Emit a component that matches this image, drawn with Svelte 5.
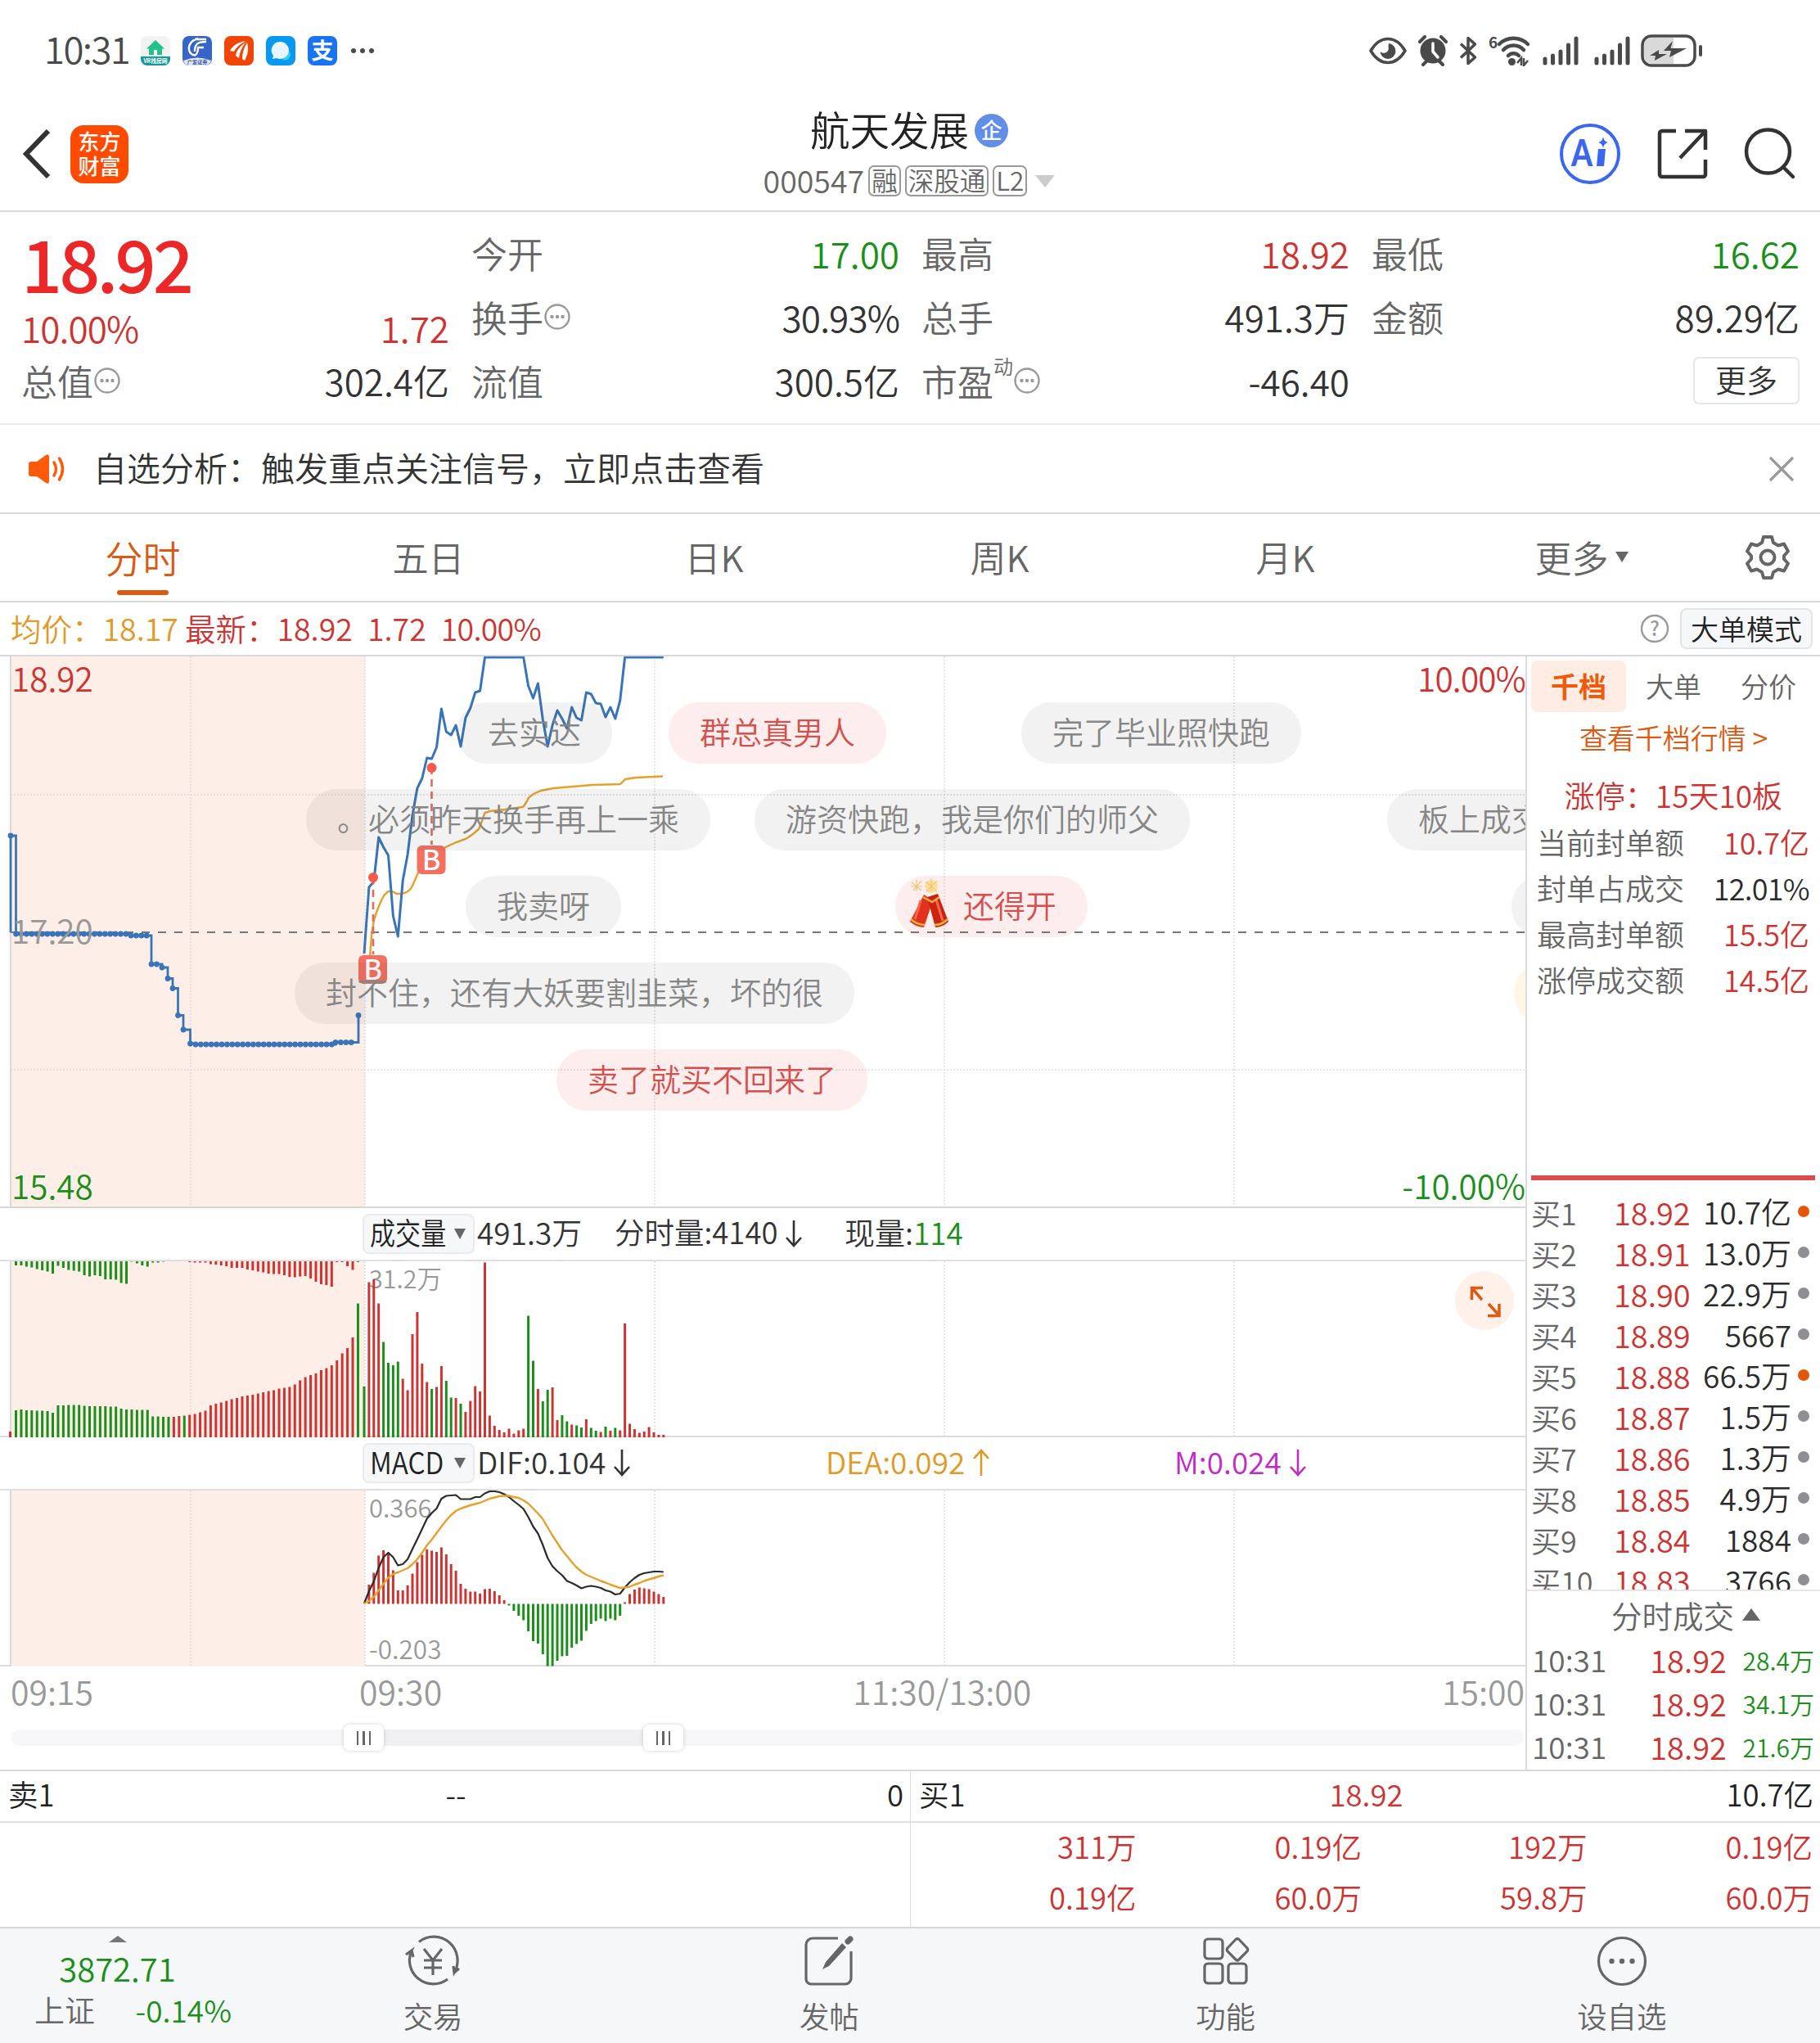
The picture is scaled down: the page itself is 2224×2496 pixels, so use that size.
<script lang="ts">
	const cells = [
		[
			{ label: '今开', value: '17.00', tone: 'green' },
			{ label: '换手', value: '30.93%', tone: '', info: true },
			{ label: '流值', value: '300.5亿', tone: '' }
		],
		[
			{ label: '最高', value: '18.92', tone: 'red' },
			{ label: '总手', value: '491.3万', tone: '' },
			{ label: '市盈', value: '-46.40', tone: '', info: true, sup: '动' }
		]
	];

	const periods = ['分时', '五日', '日K', '周K', '月K'];

	const limits = [
		{ label: '当前封单额', value: '10.7亿', tone: 'red' },
		{ label: '封单占成交', value: '12.01%', tone: '' },
		{ label: '最高封单额', value: '15.5亿', tone: 'red' },
		{ label: '涨停成交额', value: '14.5亿', tone: 'red' }
	];

	const bids = [
		['18.92', '10.7亿', true],
		['18.91', '13.0万', false],
		['18.90', '22.9万', false],
		['18.89', '5667', false],
		['18.88', '66.5万', true],
		['18.87', '1.5万', false],
		['18.86', '1.3万', false],
		['18.85', '4.9万', false],
		['18.84', '1884', false],
		['18.83', '3766', false]
	];

	const trades = ['28.4万', '34.1万', '21.6万'];
	const bigOrders = ['311万', '0.19亿', '192万', '0.19亿', '0.19亿', '60.0万', '59.8万', '60.0万'];

	// floating comments over the price chart
	const comments = [
		{ text: '去实达', x: 558, row: 0, kind: 'grey' },
		{ text: '群总真男人', x: 817, row: 0, kind: 'rose' },
		{ text: '完了毕业照快跑', x: 1248, row: 0, kind: 'grey' },
		{ text: '。必须昨天换手再上一乘', x: 374, row: 1, kind: 'grey' },
		{ text: '游资快跑，我是你们的师父', x: 922, row: 1, kind: 'grey' },
		{ text: '板上成交', x: 1695, row: 1, kind: 'grey' },
		{ text: '我卖呀', x: 569, row: 2, kind: 'grey' },
		{ text: '还得开', x: 1094, row: 2, kind: 'rose', cracker: true },
		{ text: '', x: 1847, row: 2, kind: 'grey' },
		{ text: '封不住，还有大妖要割韭菜，坏的很', x: 360, row: 3, kind: 'grey' },
		{ text: '', x: 1850, row: 3, kind: 'gold' },
		{ text: '卖了就买不回来了', x: 680, row: 4, kind: 'rose' }
	];

	const OPEN_X = 445;
	const STEP = 5.9;
	const minuteX = (i: number) => OPEN_X + i * STEP;
	const toPoints = (ys: number[]) => ys.map((y, i) => `${minuteX(i).toFixed(1)},${y}`).join(' ');

	const price = [
		363, 282, 275, 221, 233, 243, 317, 342, 274, 242, 194, 161, 149, 124, 125, 111, 64, 92, 96, 84,
		110, 75, 63, 44, 42, 1, 1, 1, 1, 1, 1, 1, 1, 1, 36, 51, 33, 77, 110, 84, 66, 76, 88, 62, 75, 78,
		44, 46, 57, 58, 74, 62, 76, 54, 1, 1, 1, 1, 1, 1, 1, 1, 1
	];

	const average =
		'452,368 454,341 457,322 460,313 463,305 467,296 470,291 474.5,287 479,287 485,290 491,290 497,288 501,285 504,280 508,271 511,264 522,253 534,242 544.5,233 557.5,227 569,223 578,217 585,211 589,201 592.5,191 599,189 617,187 639,184 642,180 646.5,172 652,168 661,164 676,161 700,159 724,157 758,156 764,150 777,148 810,146.5';

	// call auction: [from x, to x, y]
	const auction = [
		[13, 19.5, 219],
		[19.5, 160, 339],
		[160, 185, 341],
		[185, 198, 376],
		[198, 205, 380],
		[205, 211, 393.5],
		[211, 217.5, 405.5],
		[217.5, 224, 438.5],
		[224, 232.5, 456],
		[232.5, 239, 473],
		[239, 410, 474],
		[410, 438, 471.5],
		[438, 438, 438.5]
	];
	const auctionLine = auction.map(([a, b, y]) => `${a},${y} ${b},${y}`).join(' ');
	const auctionDots = auction.flatMap(([a, b, y]) => {
		const dots = [];
		for (let x = a; x < b - 3 || x === a; x += 6.4) dots.push([x, y]);
		return dots;
	});

	const matched = [
		33, 34, 33, 33, 32.5, 32.5, 32, 30, 39, 39, 39.5, 39.5, 39.5, 38.5, 38, 38, 38, 38, 37.5, 37.5,
		35, 34, 34, 33.5, 33.5, 33.5, 25.5, 25.5, 25, 25, 25, 26, 26.5, 27.5, 28.5, 30.5, 32.5, 39, 41,
		42.5, 44.5, 46.5, 48, 50, 51, 52, 53.5, 55, 56.5, 57.5, 59.5, 60.5, 61.5, 64.5, 69.5, 73.5, 76,
		78, 82, 84.5, 88, 94, 102.5, 109, 122, 163.5
	];
	const unmatched = [
		5, 5, 6.5, 7.5, 9.5, 11, 12.5, 15, 5.5, 8, 10.5, 11.5, 12.5, 17, 18.5, 17, 18, 22, 22, 22.5,
		26.5, 27.5, 0.5, 2.5, 5, 6.5, 1.5, 1.5, 0.5, 0, 0, 0, 0, 1, 1.5, 1.5, 1.5, 3.5, 4, 5, 6, 8, 8,
		8, 10, 11, 12.5, 13.5, 15, 15.5, 15.5, 17, 19, 19.5, 18.5, 18, 21, 25, 28, 29, 31, 1, 1, 6,
		10.5, 1
	];
	const isGreen = (i: number) => i < 30 || i === 32 || i === 65;

	// negative volume marks a falling minute
	const volume = [
		-62, 189.5, 193, 163.5, -116.5, -91, -88, -92.5, 71.5, 57.5, 126, 153, 90, 67.5, -59, 61.5, 87,
		-69, -48.5, 48, -41, 31, 44.5, 62.5, 56, 213.5, 26.5, 14, 9, 6, 10.5, 4.5, 8.5, 10.5, -148.5,
		-93.5, 59, -44, -58, 61, 21, -27, -19.5, 15.5, -14.5, -12, 22, -11.5, -8, 6.5, -13, 8, -11.5,
		8.5, 139, 16.5, 10, 5.5, 7, 12.5, 6, 3, 3
	];

	const macd = [
		23.5, 38, 59, 65.5, 62.5, 41, 16.5, 16.5, 22.5, 37, 51, 60, 66.5, 65, 63.5, 69, 60.5, 48.5,
		40.5, 24.5, 18.5, 15, 15, 12.5, 18, 18.5, 15.5, 10.5, 4.5, -2, -8.5, -14.5, -20, -33.5, -45.5,
		-48.5, -61.5, -76, -76, -69.5, -64, -63.5, -53.5, -49, -45, -33, -24.5, -21, -18, -21, -18, -20,
		-14.5, 2, 12, 17.5, 20, 19, 18, 15, 12, 8.5
	];
	const dif = [
		138, 123, 111, 94.5, 81.5, 76, 81.5, 91.5, 90, 84, 71.5, 59.5, 47, 34.5, 27.5, 22, 10, 6.5, 6,
		5.5, 10.5, 10.5, 10.5, 8, 8, 3.5, 1, 1, 2, 4.5, 8, 13, 17.5, 22.5, 32.5, 44, 52.5, 66.5, 82.5,
		92.5, 98.5, 103.5, 110.5, 113, 116, 119.5, 117.5, 116.5, 117.5, 119, 122, 123.5, 127, 126,
		118.5, 112, 107, 103, 101, 100, 99, 99, 99.5
	];
	const dea = [
		138, 135, 130, 122, 114, 106.5, 102, 100, 97.5, 95, 90, 84, 76, 67, 60, 52, 44, 36.5, 30, 25,
		22, 20, 18, 16.5, 15, 12.5, 10, 8.5, 7, 6.5, 6.5, 8, 9, 12, 16, 22, 28, 35, 45, 55, 64, 73, 80,
		87.5, 94, 99, 103, 105.5, 108, 110.5, 112.5, 115, 117, 119, 118.5, 117.5, 115, 113, 110.5,
		108.5, 107, 105, 103.5
	];

	const RED = '#cd3432';
	const GREEN = '#1a8f1a';
	const gridX = [233, 446, 800, 1154, 1508];
</script>

{#snippet info()}
	<svg class="info" width="32" height="32" viewBox="0 0 32 32">
		<circle cx="16" cy="16" r="14.5" fill="none" stroke="#999" stroke-width="2.4" />
		<circle cx="9.5" cy="16" r="2.2" fill="#999" />
		<circle cx="16" cy="16" r="2.2" fill="#999" />
		<circle cx="22.5" cy="16" r="2.2" fill="#999" />
	</svg>
{/snippet}

{#snippet grid(h: number)}
	<rect x="13" y="0" width="433" height={h} fill="#fdeee7" />
	{#each gridX as x}
		<line x1={x} x2={x} y1="0" y2={h} stroke="#d8d5d5" stroke-width="1.2" stroke-dasharray="2 2" />
	{/each}
	<line x1="13" x2="13" y1="0" y2={h} stroke="#d9d9db" stroke-width="2" />
{/snippet}

{#snippet signal()}
	<svg width="46" height="36" viewBox="0 0 46 36" stroke="#4a4a4a" stroke-width="5" stroke-linecap="round">
		<path d="M3 28v5M12.500 24v9M22 19v14M31.500 11v22M41 3v30" />
	</svg>
{/snippet}

{#snippet arrow(up: boolean)}
	<svg class="arrow" width="24" height="34" viewBox="0 0 24 34" fill="none" stroke="currentColor" stroke-width="2.6">
		{#if up}
			<path d="M12 33V2M3 12l9-10 9 10" />
		{:else}
			<path d="M12 1v31M3 22l9 10 9-10" />
		{/if}
	</svg>
{/snippet}

<div class="app">
	<div class="status">
		<span class="clock">10:31</span>
		<div class="notices">
			<svg width="36" height="36" viewBox="0 0 36 36">
				<rect width="36" height="36" rx="8" fill="#f1f3f3" />
				<path d="M0 25h36v3a8 8 0 0 1-8 8H8a8 8 0 0 1-8-8z" fill="#139a98" />
				<path d="M18 5L7 15.500h3V23h6v-6h4v6h6v-7.500h3z" fill="#23c08a" />
				<text x="18" y="33" font-size="6.800" font-weight="700" text-anchor="middle" fill="#fff">VR找房网</text>
			</svg>
			<svg width="36" height="36" viewBox="0 0 36 36">
				<rect width="36" height="36" rx="8" fill="#3565c8" />
				<path d="M1 30Q18 23 35 30Q33 36 28 36H8Q3 36 1 30z" fill="#dfe5f5" />
				<path d="M19 3C11 5 7 11 8 17c1 5 5 7 8 6 3-2 3-6 3-9h7M15 19c0-9 3-12 14-12M15 4h14" fill="none" stroke="#fff" stroke-width="2.400" />
				<text x="18" y="33.500" font-size="6.200" font-weight="700" text-anchor="middle" fill="#3a5fae">广发证券</text>
			</svg>
			<svg width="36" height="36" viewBox="0 0 36 36">
				<rect width="36" height="36" rx="8" fill="#f24505" />
				<path d="M26 6C16 8 10 12 7 18l5 1c3-6 8-9 14-13zM27 7c-7 5-12 10-13 17l4 3c1-8 4-14 9-20zM28 8c-4 6-6 13-6 20l3 2c4-8 5-14 3-22z" fill="#fff" />
			</svg>
			<svg width="36" height="36" viewBox="0 0 36 36">
				<rect width="36" height="36" rx="8" fill="#0798f0" />
				<circle cx="23.500" cy="23" r="6.500" fill="#2fd0ee" />
				<path d="M17 7a10.500 10.500 0 1 1-4 20l-5 1 1-4A10.500 10.500 0 0 1 17 7z" fill="#eaf6ff" />
			</svg>
			<svg width="36" height="36" viewBox="0 0 36 36">
				<rect width="36" height="36" rx="8" fill="#1874f2" />
				<text x="18" y="28" font-size="27" font-weight="700" text-anchor="middle" fill="#fff">支</text>
			</svg>
			<svg width="30" height="8" viewBox="0 0 30 8" fill="#4a4a4a">
				<circle cx="5" cy="4" r="3" /><circle cx="16" cy="4" r="3" /><circle cx="27" cy="4" r="3" />
			</svg>
		</div>
		<div class="system">
			<svg width="46" height="34" viewBox="0 0 46 34">
				<path d="M2 17C8 7 15 2.500 23 2.500S38 7 44 17C38 27 31 31.500 23 31.500S8 27 2 17z" fill="none" stroke="#4a4a4a" stroke-width="3.500" />
				<path d="M24 8a9.500 9.500 0 1 1-10.500 10c3 3 9 2 10-2 .7-3-.5-5 .5-8z" fill="#4a4a4a" />
			</svg>
			<svg width="36" height="38" viewBox="0 0 36 38">
				<circle cx="18" cy="19" r="15.500" fill="#4a4a4a" />
				<path d="M2 8l6-6M34 8l-6-6M6 36l4-4M30 36l-4-4" stroke="#4a4a4a" stroke-width="4" stroke-linecap="round" />
				<path d="M18 10v10l6 7" fill="none" stroke="#fff" stroke-width="3.500" stroke-linecap="round" />
			</svg>
			<svg width="22" height="36" viewBox="0 0 22 36" fill="none" stroke="#4a4a4a" stroke-width="3.500" stroke-linejoin="round">
				<path d="M2 9.500L19.500 26 11 33.500v-31L19.500 10 2 26.500" />
			</svg>
			<svg width="52" height="38" viewBox="0 0 52 38">
				<text x="0" y="16" font-size="19" font-weight="700" fill="#4a4a4a">6</text>
				<path d="M13 11a25 25 0 0 1 35 0M18 18a17 17 0 0 1 25 0M24 25a9 9 0 0 1 13 0" fill="none" stroke="#4a4a4a" stroke-width="4.500" stroke-linecap="round" />
				<circle cx="28.500" cy="32.500" r="4.500" fill="#4a4a4a" />
				<path d="M35 34l5-6v9M43 28v9l5-6" fill="none" stroke="#4a4a4a" stroke-width="2.500" />
			</svg>
			{@render signal()}
			<span class="sim">{@render signal()}</span>
			<svg width="76" height="40" viewBox="0 0 76 40">
				<rect x="2" y="2" width="64" height="36" rx="11" fill="#fff" stroke="#4a4a4a" stroke-width="3.500" />
				<path d="M13 4h27v32H13a9 9 0 0 1-9-9V13a9 9 0 0 1 9-9z" fill="#d9d9d9" />
				<path d="M39 9l-2.500 9H56L35 29l2-8h-9zM22 20v5h10L17 33l1-6h-7z" fill="#4a4a4a" transform="translate(0 -1)" />
				<path d="M73 15v10" stroke="#4a4a4a" stroke-width="4" stroke-linecap="round" />
			</svg>
		</div>
	</div>

	<header>
		<svg class="back" width="36" height="60" viewBox="0 0 36 60" fill="none" stroke="#333" stroke-width="6">
			<path d="M31 2L4 30l27 28" />
		</svg>
		<div class="logo"><span>东方</span><span>财富</span></div>
		<div class="heading">
			<div class="name">
				<span class="title">航天发展</span>
				<span class="badge"><b>企</b></span>
			</div>
			<div class="code">
				<span class="digits">000547</span>
				<span class="tag">融</span>
				<span class="tag">深股通</span>
				<span class="tag">L2</span>
				<i class="drop"></i>
			</div>
		</div>
		<div class="actions">
			<svg width="76" height="76" viewBox="0 0 76 76">
				<circle cx="38" cy="38" r="35" fill="none" stroke="#3a66f0" stroke-width="4" />
				<text x="15" y="53" font-size="45" font-weight="900" fill="#3a66f0" class="ai" textLength="26" lengthAdjust="spacingAndGlyphs">A</text>
				<path d="M48 32h9l-2 21h-9z" fill="#3a66f0" />
				<path d="M54 17c1 4.500 2 5.500 6 7-4 1.500-5 2.500-6 7-1-4.500-2-5.500-6-7 4-1.500 5-2.500 6-7z" fill="#3a66f0" />
			</svg>
			<svg width="62" height="62" viewBox="0 0 62 62" fill="none" stroke="#333" stroke-width="4.500" stroke-linejoin="round">
				<path d="M23 3H6a3 3 0 0 0-3 3v50a3 3 0 0 0 3 3h50a3 3 0 0 0 3-3V38M34 3h25v23M59 3L28 36" />
			</svg>
			<svg width="64" height="64" viewBox="0 0 64 64" fill="none" stroke="#333" stroke-width="4.500">
				<circle cx="29.500" cy="29" r="26.500" />
				<path d="M48 48l12 12" stroke-linecap="round" />
			</svg>
		</div>
	</header>

	<section class="quote">
		<div class="col">
			<div class="last">18.92</div>
			<div class="cell change red"><span class="pct">10.00%</span><span>1.72</span></div>
			<div class="cell"><label>总值{@render info()}</label><span>302.4亿</span></div>
		</div>
		{#each cells as col}
			<div class="col">
				{#each col as c}
					<div class="cell">
						<label>
							{c.label}{#if c.sup}<sup>{c.sup}</sup>{/if}{#if c.info}{@render info()}{/if}
						</label>
						<span class={c.tone} class:pct={c.value.endsWith('%')}>{c.value}</span>
					</div>
				{/each}
			</div>
		{/each}
		<div class="col">
			<div class="cell"><label>最低</label><span class="green">16.62</span></div>
			<div class="cell"><label>金额</label><span>89.29亿</span></div>
			<div class="cell"><label></label><button class="more">更多</button></div>
		</div>
	</section>

	<section class="notice">
		<svg width="50" height="40" viewBox="0 0 50 40">
			<path d="M2 14q0-3 3-3h7L23 3q4-2 4 2v30q0 4-4 2l-11-8H5q-3 0-3-3z" fill="#ff5a0a" />
			<path d="M33 12q5 8 0 16M39.500 7q8 13 0 26" fill="none" stroke="#ff5a0a" stroke-width="3.500" stroke-linecap="round" />
		</svg>
		<span>自选分析：触发重点关注信号，立即点击查看</span>
		<svg class="close" width="32" height="32" viewBox="0 0 32 32" stroke="#999" stroke-width="3.200">
			<path d="M2 2l28 28M30 2L2 30" />
		</svg>
	</section>

	<nav class="periods">
		{#each periods as p, i}
			<span class="period" class:active={i === 0}>{p}</span>
		{/each}
		<span class="period rest">更多<i></i></span>
		<svg class="gear" width="56" height="56" viewBox="0 0 56 56" fill="none" stroke="#666" stroke-width="4" stroke-linejoin="round">
			<path d="M23 3h10l2 7 6 3.500 7-2 5 9-5 5.500v4l5 5.500-5 9-7-2-6 3.500-2 7H23l-2-7-6-3.500-7 2-5-9 5-5.500v-4l-5-5.500 5-9 7 2 6-3.500z" />
			<circle cx="28" cy="28" r="8.500" />
		</svg>
	</nav>

	<div class="summary">
		<span class="amber">均价：18.17</span>
		<span class="red">最新：18.92</span>
		<span class="red">1.72</span>
		<span class="red pct">10.00%</span>
		<svg class="help" width="36" height="36" viewBox="0 0 36 36">
			<circle cx="18" cy="18" r="16" fill="none" stroke="#999" stroke-width="2.400" />
			<text x="18" y="26.500" font-size="24" font-weight="500" text-anchor="middle" fill="#999">?</text>
		</svg>
		<button class="mode">大单模式</button>
	</div>

	<main>
		<div class="charts">
			<div class="price">
				<svg width="1864" height="674" viewBox="0 0 1864 674">
					{@render grid(674)}
					<path d="M13 169H1864M13 505H1864" stroke="#dedcdc" stroke-width="1.500" stroke-dasharray="2 2" />
					<path d="M13 337H1864" stroke="#777" stroke-width="2" stroke-dasharray="10 10" />
					<polyline points={average} fill="none" stroke="#e6a02c" stroke-width="2.400" />
					<polyline points="13,337 {auctionLine}" fill="none" stroke="#3a74b8" stroke-width="2.800" />
					{#each auctionDots as [x, y]}
						<circle cx={x} cy={y} r="3.400" fill="#3a74b8" />
					{/each}
					<polyline points={toPoints(price)} fill="none" stroke="#3a74b8" stroke-width="3" stroke-linejoin="round" />
					<path d="M456 270v94M527.500 135v95" stroke="#e36a60" stroke-width="2.600" stroke-dasharray="9 6" />
					<circle cx="456" cy="270" r="6" fill="#f55a4c" />
					<circle cx="527.500" cy="136" r="6" fill="#f55a4c" />
					{#each [[438, 365], [509.5, 231]] as [x, y]}
						<rect {x} {y} width="35" height="35" rx="6" fill="#f5705f" />
						<text x={x + 17.5} y={y + 29.500} font-size="34" font-weight="500" text-anchor="middle" fill="#fff">B</text>
					{/each}
				</svg>
				<span class="mark lt red">18.92</span>
				<span class="mark lm">17.20</span>
				<span class="mark lb green">15.48</span>
				<span class="mark rt red pct">10.00%</span>
				<span class="mark rb green">-10.00%</span>
				{#each comments as c}
					<span class="comment {c.kind}" class:with-icon={c.cracker} style="left: {c.x}px; top: {56 + c.row * 106}px">
						{#if c.cracker}
							<svg width="50" height="64" viewBox="0 -6 50 64">
								<circle cx="28" cy="4" r="8" fill="#fbdf9a" />
								<path d="M4 -1l12 10M16 -3L6 9M3 4h14M10 -4v14M21 -2l14 12M35 -3L22 10M28 -6v16" stroke="#ecc87a" stroke-width="1.200" />
								<path d="M19 14l11 7-11 33q-9 0-17-7z" fill="#e0321c" />
								<path d="M23 17l13-4 13 34q-7 7-16 7z" fill="#cc2212" />
								<path d="M15 21L8 44M34 20l8 26" stroke="#f4694c" stroke-width="3" />
								<path d="M3 44q8 7 17 7M32 51q9 0 16-7M18 17l11 6 9-6" fill="none" stroke="#f0b040" stroke-width="2.500" />
							</svg>
						{/if}
						{c.text}
					</span>
				{/each}
			</div>

			<div class="head">
				<button class="pick"><b>成交量</b><i></i></button>
				<span class="vol-total">491.3万</span>
				<span class="vol-minute">分时量:4140{@render arrow(false)}</span>
				<span>现量:<em class="green">114</em></span>
			</div>
			<div class="pane">
				<svg width="1864" height="215" viewBox="0 0 1864 215">
					{@render grid(215)}
					<rect x="11" y="208" width="3" height="7" fill={RED} />
					{#each matched as h, i}
						<rect x={18 + i * 6.43} y={215 - h} width="3" height={h} fill={isGreen(i) ? GREEN : RED} />
						<rect x={18 + i * 6.43} y="0" width="3" height={unmatched[i]} fill={isGreen(i) ? GREEN : RED} />
					{/each}
					<text x="451" y="33" font-size="30.500" fill="#999">31.2万</text>
					{#each volume as v, i}
						<rect x={minuteX(i) - 1.5} y={215 - Math.abs(v)} width="3" height={Math.abs(v)} fill={v < 0 ? GREEN : RED} />
					{/each}
				</svg>
				<svg class="expand" width="74" height="74" viewBox="0 0 74 74">
					<circle cx="37" cy="37" r="36" fill="#fff0e9" />
					<path d="M35 21.500H21.500V36M22 22l12 14M55 41v14.500H41M42 41l13 14" fill="none" stroke="#dc5a12" stroke-width="3.500" />
				</svg>
			</div>

			<div class="head macd-head">
				<button class="pick"><b>MACD</b><i></i></button>
				<span class="dif">DIF:0.104{@render arrow(false)}</span>
				<span class="dea">DEA:0.092{@render arrow(true)}</span>
				<span class="m">M:0.024{@render arrow(false)}</span>
			</div>
			<div class="pane">
				<svg width="1864" height="215" viewBox="0 0 1864 215">
					{@render grid(215)}
					<text x="451" y="33" font-size="31" fill="#999">0.366</text>
					<text x="451" y="206" font-size="31.500" fill="#999">-0.203</text>
					{#each macd as v, i}
						<rect x={minuteX(i + 1) - 1.5} y={v > 0 ? 138.5 - v : 138.5} width="3" height={Math.abs(v)} fill={v > 0 ? RED : GREEN} />
					{/each}
					<polyline points={toPoints(dif)} fill="none" stroke="#2b2b2b" stroke-width="2.200" stroke-linejoin="round" />
					<polyline points={toPoints(dea)} fill="none" stroke="#e6a02c" stroke-width="2.400" stroke-linejoin="round" />
				</svg>
			</div>

			<div class="axis">
				<span>09:15</span>
				<span class="open">09:30</span>
				<span class="noon">11:30/13:00</span>
				<span class="end">15:00</span>
			</div>
			<div class="slider">
				<div class="range">
					<span class="handle"><i></i><i></i><i></i></span>
					<span class="handle"><i></i><i></i><i></i></span>
				</div>
			</div>
		</div>

		<aside>
			<div class="depth-tabs"><span class="on">千档</span><span>大单</span><span>分价</span></div>
			<div class="link">查看千档行情&nbsp;&gt;</div>
			<div class="streak">涨停：15天10板</div>
			{#each limits as l}
				<div class="limit">
					<span>{l.label}</span>
					<span class={l.tone || 'dark'} class:pct={l.value.endsWith('%')}>{l.value}</span>
				</div>
			{/each}
			<div class="bar"></div>
			<div class="bids">
				{#each bids as [p, amount, hot], i}
					<div class="bid">
						<span class="level">买{i + 1}</span>
						<span class="red">{p}</span>
						<span class="amount">{amount}</span>
						<i class:hot></i>
					</div>
				{/each}
			</div>
			<div class="ticks-title">分时成交<i></i></div>
			{#each trades as t}
				<div class="tick"><span>10:31</span><span class="red">18.92</span><span class="green size">{t}</span></div>
			{/each}
		</aside>
	</main>

	<section class="book">
		<div class="side">
			<div class="best"><span>卖1</span><span>--</span><span>0</span></div>
		</div>
		<div class="side buy">
			<div class="best"><span>买1</span><span class="red">18.92</span><span>10.7亿</span></div>
			<div class="orders">
				{#each bigOrders as o}
					<span>{o}</span>
				{/each}
			</div>
		</div>
	</section>

	<footer>
		<div class="index">
			<i></i>
			<span class="green point">3872.71</span>
			<div><span>上证</span><span class="green">-0.14%</span></div>
		</div>
		<div class="item">
			<svg width="70" height="64" viewBox="0 0 70 64" fill="none" stroke="#666" stroke-width="3.200">
				<path d="M18 8.500A29 29 0 0 1 61 46l-1-8M61 46l6-5M53 54A29 29 0 0 1 9 19l-7 5M9 19l2 8" />
				<path d="M24 17l11 14 11-14M24 31h22M24 40h22M35 31v18" />
			</svg>
			<span>交易</span>
		</div>
		<div class="item">
			<svg width="60" height="64" viewBox="0 0 60 64" fill="none" stroke="#666" stroke-width="3.200">
				<path d="M41 4H10a8 8 0 0 0-8 8v42a6 6 0 0 0 6 6h42a7 7 0 0 0 7-7V20" />
				<path d="M22 42l4-9L46 10l5 5-21 23z" fill="#666" stroke="none" />
				<path d="M53 8l3-3" stroke-width="7" stroke-linecap="round" />
			</svg>
			<span>发帖</span>
		</div>
		<div class="item">
			<svg width="58" height="64" viewBox="0 0 58 64" fill="none" stroke="#666" stroke-width="3.200">
				<rect x="3" y="5" width="22" height="24" rx="4" />
				<rect x="3" y="35" width="22" height="24" rx="4" />
				<rect x="32" y="35" width="22" height="24" rx="4" />
				<path d="M41 5.500q2-2 4 0L55 16q1.500 2 0 4L45 30q-2 2-4 0L31 20q-1.500-2 0-4z" />
			</svg>
			<span>功能</span>
		</div>
		<div class="item">
			<svg width="64" height="64" viewBox="0 0 64 64">
				<circle cx="32" cy="32" r="28.500" fill="none" stroke="#666" stroke-width="3.200" />
				<g fill="#666"><circle cx="19.500" cy="32" r="3.200" /><circle cx="32" cy="32" r="3.200" /><circle cx="44.500" cy="32" r="3.200" /></g>
			</svg>
			<span>设自选</span>
		</div>
	</footer>
</div>

<style>
	:global(body) {
		margin: 0;
		background: #fff;
	}

	.app {
		width: 2224px;
		height: 2496px;
		overflow: hidden;
		display: flex;
		flex-direction: column;
		background: #fff;
		color: #333;
		font-family: 'Noto Sans CJK SC', 'Noto Sans', sans-serif;
		font-weight: 350;
		font-size: 36px;
		line-height: 1;
		white-space: nowrap;
	}

	.app * {
		box-sizing: border-box;
	}

	svg {
		display: block;
		flex: none;
	}

	button {
		font: inherit;
		color: inherit;
		padding: 0;
	}

	.red {
		color: #cd3432;
	}

	.green {
		color: #1a8f1a;
	}

	.amber {
		color: #e09a28;
	}

	.dark {
		color: #2b2b2b;
	}

	.pct {
		letter-spacing: -0.02em;
	}

	.status {
		height: 124px;
		display: flex;
		align-items: center;
		padding: 0 143px 0 54px;
	}

	.clock {
		width: 118px;
		padding-bottom: 6px;
		font-size: 45.500px;
		letter-spacing: -1.6px;
		color: #4a4a4a;
	}

	.notices {
		display: flex;
		align-items: center;
		gap: 15px;
	}

	.system {
		margin-left: auto;
		display: flex;
		align-items: center;
		gap: 14px;
	}

	.sim {
		margin: 0 -3px 0 3px;
	}

	header {
		height: 135px;
		display: flex;
		align-items: center;
		padding: 0 29px 5px 28px;
		border-bottom: 2px solid #dcdcde;
	}

	.logo {
		width: 71px;
		height: 71px;
		margin-left: 22px;
		padding-bottom: 3px;
		border-radius: 16px;
		background: #ff4a00;
		color: #fff;
		font-size: 26px;
		font-weight: 500;
		display: flex;
		flex-direction: column;
		align-items: center;
		justify-content: center;
		gap: 4px;
	}

	.heading {
		flex: 1;
		padding-left: 160px;
		display: flex;
		flex-direction: column;
		align-items: center;
	}

	.name {
		height: 66px;
		display: flex;
		align-items: center;
		gap: 7px;
		font-size: 48.500px;
		color: #222;
	}

	.title {
		padding-bottom: 3px;
	}

	.badge {
		width: 41px;
		height: 41px;
		border-radius: 50%;
		background: #628ee8;
		color: #fff;
		font-size: 26px;
		display: flex;
		align-items: center;
		justify-content: center;
	}

	.badge b {
		font-weight: 500;
		padding-bottom: 2px;
	}

	.code {
		height: 58px;
		display: flex;
		align-items: center;
		gap: 5px;
		font-size: 37.500px;
		color: #666;
	}

	.digits {
		padding-bottom: 2px;
	}

	.tag {
		height: 38px;
		padding: 0 2px;
		border: 2px solid #999;
		border-radius: 7px;
		font-size: 31.500px;
		line-height: 31px;
	}

	.drop {
		margin-left: 5px;
		border: 12px solid transparent;
		border-top: 15px solid #ccc;
		border-bottom: 0;
	}

	.actions {
		display: flex;
		align-items: center;
		gap: 44px;
	}

	.ai {
		font-family: Lato, sans-serif;
	}

	.quote {
		height: 260px;
		padding: 13px 25px 0 26px;
		display: grid;
		grid-template-columns: repeat(4, 523px);
		gap: 27px;
		border-bottom: 2px solid #eaeaec;
		font-size: 44px;
	}

	.cell {
		height: 78px;
		padding-bottom: 5px;
		display: flex;
		align-items: center;
		justify-content: space-between;
	}

	.cell label {
		display: flex;
		align-items: center;
		color: #666;
	}

	.cell sup {
		font-size: 24px;
		line-height: 1;
		margin-bottom: 36px;
	}

	.info {
		margin-left: 1px;
	}

	.last {
		height: 104px;
		padding-bottom: 8px;
		display: flex;
		align-items: center;
		font-size: 88px;
		font-weight: 500;
		letter-spacing: -4px;
		color: #ec2727;
	}

	.change {
		height: 52px;
	}

	.more {
		width: 130px;
		height: 58px;
		padding-bottom: 4px;
		border: 2px solid #e6e6e8;
		border-radius: 7px;
		background: #fff;
		font-size: 38px;
	}

	.notice {
		height: 109px;
		display: flex;
		align-items: center;
		padding: 0 31px 0 33px;
		border-bottom: 2px solid #d8d8da;
		font-size: 41px;
	}

	.notice span {
		margin-left: 31px;
		padding-bottom: 5px;
	}

	.close {
		margin-left: auto;
	}

	.periods {
		height: 108px;
		display: flex;
		align-items: center;
		border-bottom: 2px solid #d8d8da;
		font-size: 44px;
		color: #666;
	}

	.period {
		width: 349px;
		height: 100%;
		padding-bottom: 2px;
		display: flex;
		align-items: center;
		justify-content: center;
		position: relative;
	}

	.period.active {
		font-size: 46px;
		color: #d85a14;
	}

	.period.active::after {
		content: '';
		position: absolute;
		bottom: 7px;
		width: 63px;
		height: 6px;
		border-radius: 3px;
		background: #dc5a12;
	}

	.period.rest {
		width: 375px;
		font-size: 45px;
	}

	.period.rest i {
		margin-left: 8px;
		border: 8px solid transparent;
		border-top: 13px solid #666;
		border-bottom: 0;
	}

	.gear {
		margin-left: 12px;
	}

	.summary {
		height: 66px;
		display: flex;
		align-items: center;
		padding: 0 9px 0 13px;
		border-bottom: 2px solid #d8d8da;
		font-size: 37.500px;
	}

	.summary span {
		margin-right: 18px;
		padding-bottom: 3px;
	}

	.summary .amber {
		margin-right: 8px;
	}

	.help {
		margin-left: auto;
	}

	.mode {
		width: 162px;
		height: 50px;
		margin-left: 13px;
		border: 2px solid #e2e4e7;
		border-radius: 8px;
		background: #f6f7f9;
		font-size: 34px;
		color: #222;
	}

	main {
		display: flex;
		height: 1360px;
	}

	.charts {
		width: 1864px;
		display: flex;
		flex-direction: column;
	}

	.price {
		height: 674px;
		position: relative;
		overflow: hidden;
		border-bottom: 2px solid #d6d6d8;
	}

	.mark {
		position: absolute;
		font-size: 40.500px;
		line-height: 40px;
	}

	.lt {
		left: 14px;
		top: 6px;
	}

	.lm {
		left: 14px;
		top: 314px;
		color: #999;
	}

	.lb {
		left: 14px;
		bottom: 6px;
	}

	.rt {
		right: 0;
		top: 6px;
	}

	.rb {
		right: 0;
		bottom: 6px;
	}

	.comment {
		position: absolute;
		height: 75px;
		min-width: 100px;
		padding: 0 38px 5px;
		border-radius: 37px;
		display: flex;
		align-items: center;
		font-size: 38px;
	}

	.comment.grey {
		background: rgba(60, 60, 60, 0.065);
		color: #868686;
	}

	.comment.rose {
		background: rgba(235, 50, 50, 0.09);
		color: #d4504e;
	}

	.comment.gold {
		background: #fff6e6;
	}

	.comment.with-icon {
		padding-left: 16px;
		gap: 17px;
	}

	.head {
		height: 65px;
		padding-left: 443px;
		display: flex;
		align-items: center;
		border-bottom: 2px solid #e0e0e2;
		font-size: 37px;
	}

	.head > span {
		padding-bottom: 4px;
	}

	.pick {
		width: 137px;
		height: 49px;
		display: flex;
		align-items: center;
		border: 2px solid #e8eaed;
		border-radius: 8px;
		background: #f6f7f9;
		color: #222;
		padding-left: 7px;
	}

	.pick b {
		width: 103px;
		padding-bottom: 4px;
		text-align: left;
		font-weight: inherit;
		transform: scaleX(0.84);
		transform-origin: left;
	}

	.macd-head .pick b {
		transform: scaleX(0.9);
	}

	.pick i {
		border: 7.500px solid transparent;
		border-top: 13px solid #666;
		border-bottom: 0;
	}

	.vol-total {
		width: 168px;
		margin-left: 3px;
	}

	.vol-minute {
		width: 281px;
		display: flex;
		align-items: center;
		font-size: 36.500px;
	}

	em {
		font-style: normal;
	}

	.arrow {
		margin: 3px 0 0 8px;
	}

	.macd-head span {
		display: flex;
		align-items: center;
	}

	.dif {
		width: 426px;
		margin-left: 3px;
	}

	.dea {
		width: 426px;
		color: #e09a28;
	}

	.m {
		color: #c02cc8;
	}

	.pane {
		height: 215px;
		position: relative;
		border-bottom: 2px solid #dcdcde;
	}

	.expand {
		position: absolute;
		right: 13px;
		top: 11px;
	}

	.axis {
		height: 65px;
		display: flex;
		align-items: center;
		padding: 0 1px 6px 13px;
		font-size: 41px;
		color: #999;
	}

	.open {
		margin-left: 325px;
	}

	.noon {
		margin-left: 502px;
	}

	.end {
		margin-left: auto;
	}

	.slider {
		height: 20px;
		margin: 12px 2px 0 14px;
		border-radius: 10px;
		background: #f7f7f9;
	}

	.range {
		height: 20px;
		width: 415px;
		margin-left: 406px;
		display: flex;
		align-items: center;
		justify-content: space-between;
		background: #f0f0f3;
	}

	.handle {
		width: 49px;
		height: 32px;
		border-radius: 7px;
		background: #fff;
		box-shadow: 0 0 5px rgba(0, 0, 0, 0.18);
		display: flex;
		align-items: center;
		justify-content: center;
		gap: 5px;
	}

	.handle i {
		width: 2.500px;
		height: 17px;
		background: #666;
	}

	aside {
		width: 360px;
		padding-top: 5px;
		border-left: 2px solid #dcdce0;
		color: #666;
	}

	.depth-tabs {
		height: 63px;
		display: flex;
		padding-left: 5px;
		font-size: 34px;
	}

	.depth-tabs span {
		width: 116px;
		padding-bottom: 2px;
		display: flex;
		align-items: center;
		justify-content: center;
	}

	.depth-tabs .on {
		border-radius: 8px;
		background: #ffede4;
		color: #f05a0c;
		font-weight: 700;
	}

	.link {
		height: 64px;
		line-height: 62px;
		text-align: center;
		font-size: 34px;
		color: #dc5a12;
	}

	.streak {
		height: 68px;
		line-height: 74px;
		text-align: center;
		font-size: 37px;
		color: #cd3432;
	}

	.limit {
		height: 56px;
		padding: 0 13px 5px 12px;
		display: flex;
		align-items: center;
		justify-content: space-between;
	}

	.bar {
		height: 6px;
		margin: 210px 6px 16px 5px;
		background: #db4d4d;
	}

	.bids {
		height: 486px;
		overflow: hidden;
		border-bottom: 2px solid #e6e6e8;
	}

	.bid {
		height: 50px;
		display: grid;
		grid-template-columns: 101px 97px 120px 1fr;
		align-items: center;
		padding: 0 0 5px 5px;
	}

	.bid .red {
		font-size: 38px;
	}

	.bid .amount {
		font-size: 37px;
		color: #2b2b2b;
		text-align: right;
	}

	.bid i {
		width: 14px;
		height: 14px;
		margin: -2px 0 0 8px;
		border-radius: 50%;
		background: #8e8e93;
	}

	.bid i.hot {
		background: #e65505;
	}

	.ticks-title {
		height: 57px;
		display: flex;
		align-items: center;
		justify-content: center;
		padding-left: 30px;
		font-size: 37.500px;
	}

	.ticks-title i {
		margin-left: 10px;
		border: 11px solid transparent;
		border-bottom: 15px solid #666;
		border-top: 0;
	}

	.tick {
		height: 53px;
		display: flex;
		align-items: center;
		padding: 0 7px 0 6px;
		font-size: 37px;
	}

	.tick .red {
		margin-left: 53px;
		font-size: 38px;
	}

	.tick .size {
		margin-left: auto;
		font-size: 30px;
	}

	.book {
		height: 192px;
		display: flex;
		border-top: 2px solid #d8d8dc;
	}

	.side {
		width: 1112px;
	}

	.buy {
		border-left: 1px solid #dcdce0;
	}

	.best {
		height: 63px;
		display: grid;
		grid-template-columns: 1fr 1fr 1fr;
		align-items: center;
		padding: 0 8px 4px 10px;
		border-bottom: 2px solid #e0e0e2;
		color: #222;
		font-size: 36.500px;
	}

	.best span:nth-child(2) {
		text-align: center;
	}

	.best span:nth-child(3) {
		text-align: right;
	}

	.orders {
		display: grid;
		grid-template-columns: repeat(4, 275.500px);
		grid-auto-rows: 62px;
		align-items: center;
		margin-top: -2px;
		text-align: right;
		color: #cd3432;
		font-size: 36.500px;
	}

	footer {
		flex: 1;
		display: flex;
		background: #f6f7f9;
		border-top: 2px solid #d4d6da;
		color: #666;
	}

	.index {
		width: 287px;
		display: flex;
		flex-direction: column;
		align-items: center;
		padding-top: 9px;
	}

	.index > i {
		border: 11px solid transparent;
		border-bottom: 8px solid #777;
		border-top: 0;
	}

	.index .point {
		margin: 11px 0 13px;
		font-size: 40px;
	}

	.index div {
		width: 241px;
		margin-left: 38px;
		display: flex;
		justify-content: space-between;
		font-size: 37px;
	}

	.item {
		flex: 1;
		display: flex;
		flex-direction: column;
		align-items: center;
		padding-top: 8px;
	}

	.item span {
		margin-top: 17px;
		font-size: 36.500px;
	}
</style>
